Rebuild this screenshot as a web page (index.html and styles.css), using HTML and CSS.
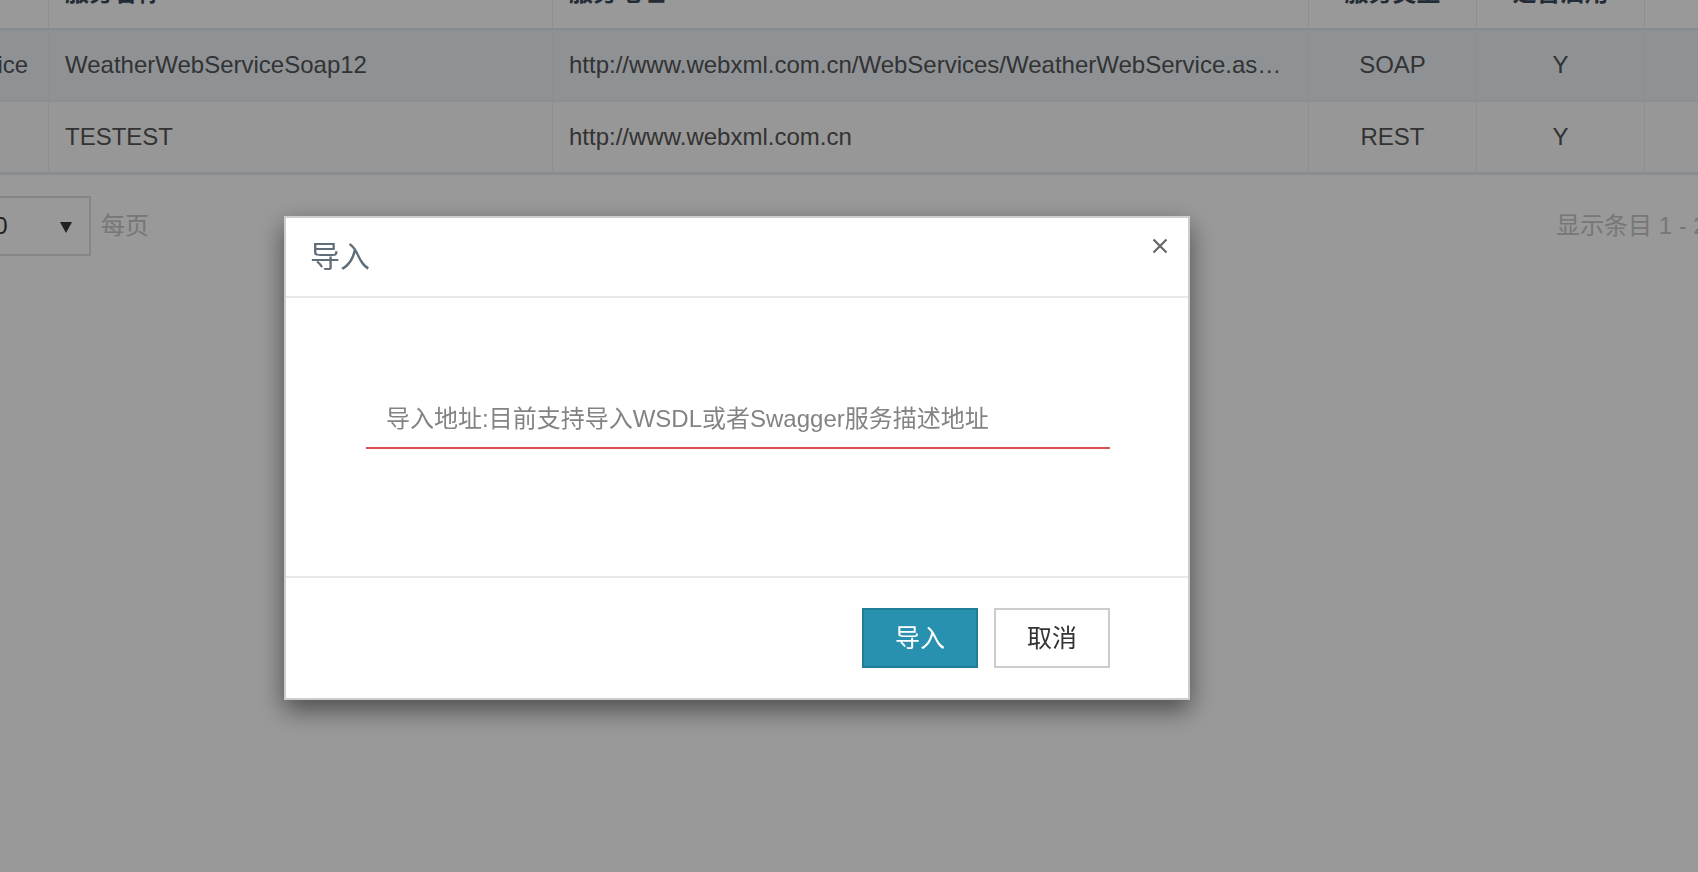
FILE: index.html
```html
<!DOCTYPE html>
<html lang="zh-CN">
<head>
<meta charset="utf-8">
<title>导入</title>
<link rel="stylesheet" href="styles.css">
</head>
<body>
<div class="page">
  <table class="grid">
    <colgroup>
      <col class="c1"><col class="c2"><col class="c3"><col class="c4"><col class="c5"><col class="c6">
    </colgroup>
    <thead>
      <tr>
        <th>服务编码</th>
        <th>服务名称</th>
        <th>服务地址</th>
        <th class="center">服务类型</th>
        <th class="center">是否启用</th>
        <th class="center">操作</th>
      </tr>
    </thead>
    <tbody>
      <tr class="selected">
        <td>WeatherWebService</td>
        <td>WeatherWebServiceSoap12</td>
        <td class="ellipsis">http://www.webxml.com.cn/WebServices/WeatherWebService.asmx?wsdl</td>
        <td class="center">SOAP</td>
        <td class="center">Y</td>
        <td></td>
      </tr>
      <tr class="last">
        <td>TEST</td>
        <td>TESTEST</td>
        <td class="ellipsis">http://www.webxml.com.cn</td>
        <td class="center">REST</td>
        <td class="center">Y</td>
        <td></td>
      </tr>
    </tbody>
  </table>
  <div class="pager">
    <div class="page-size">
      <span class="page-size-value">10</span>
      <span class="caret"></span>
    </div>
    <span class="pager-label">每页</span>
    <span class="pager-info">显示条目 1 - 2 共 2 条</span>
  </div>
</div>

<div class="backdrop"></div>

<div class="modal">
  <div class="modal-header">
    <span class="modal-title">导入</span>
    <button class="modal-close" type="button" aria-label="关闭">
      <svg width="16" height="16" viewBox="0 0 16 16"><path d="M1.5 1.5 L14.5 14.5 M14.5 1.5 L1.5 14.5" stroke="#666" stroke-width="2.2" fill="none"/></svg>
    </button>
  </div>
  <div class="modal-body">
    <input class="url-input" type="text" placeholder="导入地址:目前支持导入WSDL或者Swagger服务描述地址">
  </div>
  <div class="modal-footer">
    <button class="btn btn-primary" type="button">导入</button>
    <button class="btn btn-default" type="button">取消</button>
  </div>
</div>
</body>
</html>
```
FILE: styles.css
```css
html, body {
  margin: 0;
  padding: 0;
  width: 100%;
  height: 100%;
  overflow: hidden;
  background: #ffffff;
  font-family: "Liberation Sans", "Noto Sans CJK SC", sans-serif;
  color: #555555;
}

.page {
  margin-top: -42px;
  margin-left: -207px;
  width: 2152px;
}

.grid {
  table-layout: fixed;
  width: 2152px;
  border-collapse: separate;
  border-spacing: 0;
  font-size: 24px;
}

.c1 { width: 256px; }
.c2 { width: 504px; }
.c3 { width: 756px; }
.c4 { width: 168px; }
.c5 { width: 168px; }
.c6 { width: 300px; }

.grid th,
.grid td {
  box-sizing: border-box;
  padding: 0 16px;
  text-align: left;
  vertical-align: middle;
  border-right: 1px solid #e8eef5;
  white-space: nowrap;
  overflow: hidden;
  line-height: 28px;
}

.grid th {
  height: 72px;
  font-weight: bold;
  color: #3b4a59;
  border-bottom: 2px solid #e2e8ee;
}

.grid td {
  height: 72px;
  border-bottom: 2px solid #e9eef4;
  background: #fcfcfc;
}

.grid tr.selected td {
  background: #edf3f9;
}

.grid tr.last td {
  height: 73px;
  border-bottom: 3px solid #e6ebf0;
}

.grid .center {
  text-align: center;
}

.grid .ellipsis {
  text-overflow: ellipsis;
}

.pager {
  display: flex;
  align-items: center;
  margin-top: 21px;
  padding-left: 172px;
  font-size: 24px;
}

.page-size {
  box-sizing: border-box;
  width: 126px;
  height: 60px;
  border: 2px solid #e0e0e0;
  display: flex;
  align-items: center;
  justify-content: space-between;
  padding: 0 17px 0 14px;
  color: #383838;
}

.page-size-value {
  line-height: 28px;
}

.caret {
  width: 0;
  height: 0;
  border-left: 6px solid transparent;
  border-right: 6px solid transparent;
  border-top: 11px solid #383838;
  margin-top: 2px;
}

.pager-label {
  margin-left: 10px;
  color: #c6c6c6;
  line-height: 28px;
}

.pager-info {
  margin-left: auto;
  width: 389px;
  color: #c6c6c6;
  line-height: 28px;
  white-space: nowrap;
}

.backdrop {
  position: fixed;
  inset: 0;
  background: rgba(0, 0, 0, 0.4);
}

.modal {
  position: fixed;
  left: 284px;
  top: 216px;
  width: 906px;
  box-sizing: border-box;
  background: #ffffff;
  border: 2px solid #cdcdcd;
  box-shadow: 0 10px 24px rgba(0, 0, 0, 0.5);
}

.modal-header {
  height: 78px;
  display: flex;
  align-items: center;
  justify-content: space-between;
  padding: 0 20px 0 24px;
  border-bottom: 2px solid #e8e8e8;
}

.modal-title {
  font-size: 30px;
  line-height: 30px;
  color: #5f6e7a;
}

.modal-close {
  align-self: flex-start;
  margin-top: 20px;
  width: 16px;
  height: 16px;
  padding: 0;
  border: none;
  background: none;
  display: block;
}

.modal-close svg {
  display: block;
}

.modal-body {
  padding: 93px 78px 127px 80px;
}

.url-input {
  display: block;
  box-sizing: border-box;
  width: 100%;
  height: 58px;
  margin: 0;
  padding: 0 0 0 20px;
  border: none;
  border-bottom: 2px solid #d9534f;
  outline: none;
  font-family: "Liberation Sans", "Noto Sans CJK SC", sans-serif;
  font-size: 24px;
  color: #333333;
  background: transparent;
}

.url-input::placeholder {
  color: #838383;
}

.modal-footer {
  display: flex;
  justify-content: flex-end;
  gap: 16px;
  padding: 30px 78px 30px 0;
  border-top: 2px solid #e8e8e8;
}

.btn {
  box-sizing: border-box;
  width: 116px;
  height: 60px;
  margin: 0;
  padding: 0;
  font-family: "Liberation Sans", "Noto Sans CJK SC", sans-serif;
  font-size: 25px;
  line-height: 28px;
  cursor: pointer;
}

.btn-primary {
  background: #2891b0;
  border: 2px solid #1f7d99;
  color: #ffffff;
}

.btn-default {
  background: #ffffff;
  border: 2px solid #cccccc;
  color: #333333;
}
```
